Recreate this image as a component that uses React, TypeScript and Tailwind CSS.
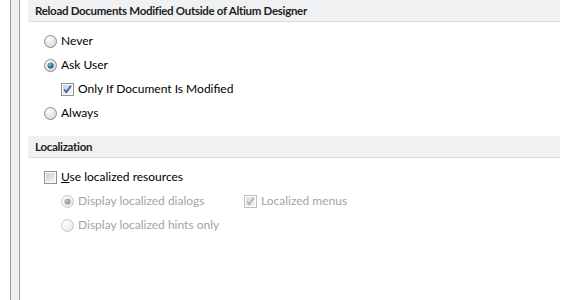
import React from 'react';

function Radio({ checked = false, disabled = false }: { checked?: boolean; disabled?: boolean }) {
  const ring = disabled ? '#c8c8c8' : '#8a8a8a';
  return (
    <svg width="13" height="13" viewBox="0 0 13 13" className="shrink-0">
      <defs>
        <radialGradient id={`rf${disabled ? 'd' : 'n'}`} cx="0.35" cy="0.3" r="0.8">
          <stop offset="0" stopColor="#ffffff" />
          <stop offset="1" stopColor={disabled ? '#e6e6e6' : '#d4d4d4'} />
        </radialGradient>
        <radialGradient id={`rd${disabled ? 'd' : 'n'}`} cx="0.4" cy="0.35" r="0.7">
          <stop offset="0" stopColor={disabled ? '#c4c4c4' : '#7ed0f2'} />
          <stop offset="1" stopColor={disabled ? '#8c8c8c' : '#0c3550'} />
        </radialGradient>
      </defs>
      <circle cx="6.5" cy="6.5" r="6" fill={`url(#rf${disabled ? 'd' : 'n'})`} stroke={ring} strokeWidth="1" />
      {checked && <circle cx="6.5" cy="6.5" r="3" fill={`url(#rd${disabled ? 'd' : 'n'})`} />}
    </svg>
  );
}

function Check({ checked = false, disabled = false }: { checked?: boolean; disabled?: boolean }) {
  return (
    <svg width="13" height="13" viewBox="0 0 13 13" className="shrink-0">
      <defs>
        <linearGradient id={`cb${disabled ? 'd' : 'n'}`} x1="0" y1="0" x2="1" y2="1">
          <stop offset="0" stopColor={disabled ? '#dcdcdc' : '#cbcfd5'} />
          <stop offset="1" stopColor={disabled ? '#f4f4f4' : '#f6f6f6'} />
        </linearGradient>
      </defs>
      <rect x="0.5" y="0.5" width="12" height="12" fill="#fff" stroke={disabled ? '#bcbcbc' : '#8e8f8f'} />
      <rect x="2" y="2" width="9" height="9" fill={`url(#cb${disabled ? 'd' : 'n'})`} />
      {checked && (
        <path
          d="M3.2 6.6 L5.3 9.3 L9.8 2.8"
          fill="none"
          stroke={disabled ? '#b4b4b4' : '#3a5fa8'}
          strokeWidth="1.7"
          strokeLinejoin="round"
        />
      )}
    </svg>
  );
}

function Header({ title }: { title: string }) {
  return (
    <div className="h-[22px] bg-[#f0f1f3] border-b border-[#dcdde0] flex items-center pl-[7px] mr-px font-bold text-[11.5px] tracking-[-0.3px] text-[#1e1e1e]">
      {title}
    </div>
  );
}

export default function App() {
  return (
    <div
      className="w-[561px] h-[300px] bg-white flex text-[12px] text-[#000] overflow-hidden"
      style={{ fontFamily: 'Lato, "Open Sans", sans-serif' }}
    >
      {/* left splitter */}
      <div className="w-[10px]" />
      <div className="w-[10px] bg-[#f0f0f0] border-x border-[#9b9aa8]" />
      <div className="w-[8px]" />

      <div className="flex-1 flex flex-col">
        <Header title="Reload Documents Modified Outside of Altium Designer" />
        <div className="flex flex-col pt-[7px] pb-[11px]">
          <label className="h-6 flex items-center gap-1 pl-[16px]">
            <Radio />
            <span>Never</span>
          </label>
          <label className="h-6 flex items-center gap-1 pl-[16px]">
            <Radio checked />
            <span>Ask User</span>
          </label>
          <label className="h-6 flex items-center gap-1 pl-[33px]">
            <Check checked />
            <span>Only If Document Is Modified</span>
          </label>
          <label className="h-6 flex items-center gap-1 pl-[16px]">
            <Radio />
            <span>Always</span>
          </label>
        </div>

        <Header title="Localization" />
        <div className="flex flex-col pt-[7px]">
          <label className="h-6 flex items-center gap-1 pl-[16px]">
            <Check />
            <span>
              <span className="underline">U</span>se localized resources
            </span>
          </label>
          <div className="h-6 flex items-center text-[#a3a3a3]">
            <label className="w-[216px] flex items-center gap-1 pl-[33px]">
              <Radio checked disabled />
              <span>Display localized dialogs</span>
            </label>
            <label className="flex items-center gap-1">
              <Check checked disabled />
              <span>Localized menus</span>
            </label>
          </div>
          <label className="h-6 flex items-center gap-1 pl-[33px] text-[#a3a3a3]">
            <Radio disabled />
            <span>Display localized hints only</span>
          </label>
        </div>
      </div>
    </div>
  );
}
